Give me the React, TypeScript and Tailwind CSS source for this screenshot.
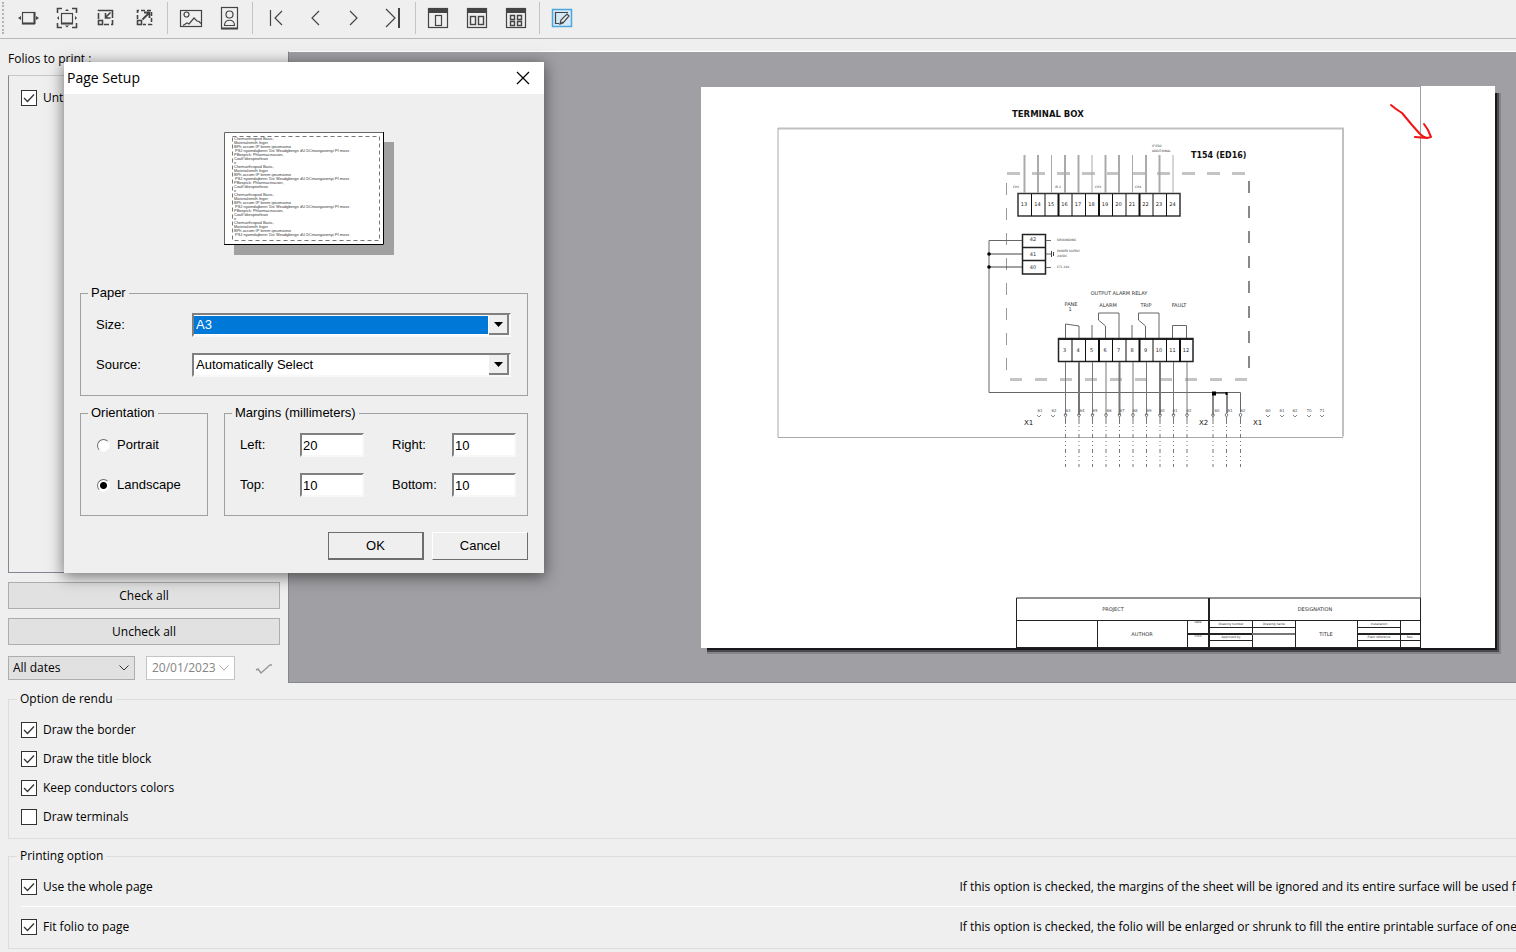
import { useState } from "react";
import type { ReactNode } from "react";

const CheckBox = ({ id, label, checked = false }: { id: string; label: string; checked?: boolean }) => {
  const [on, setOn] = useState(checked);

  return (
    <div className="flex items-center gap-1.5">
      <span className="grid size-4 shrink-0">
        <input
          id={id}
          type="checkbox"
          checked={on}
          onChange={(e) => setOn(e.target.checked)}
          className="col-start-1 row-start-1 size-4 appearance-none border border-[#333] bg-white"
        />
        {on && (
          <svg viewBox="0 0 16 16" className="pointer-events-none col-start-1 row-start-1 size-4" fill="none" stroke="#333" strokeWidth="1.3">
            <path d="M3 8l3.5 3.5L13 4.5" />
          </svg>
        )}
      </span>
      <label htmlFor={id} className="whitespace-nowrap">{label}</label>
    </div>
  );
};

const Group = ({ title, children, className }: { title: string; children: ReactNode; className?: string }) => (
  <fieldset className={`ml-2 border border-r-0 border-[#dcdcdc] ${className}`}>
    <legend className="ml-2 h-[18px] px-[3px] leading-[18px]">{title}</legend>
    {children}
  </fieldset>
);

const DialogGroup = ({ title, children, className }: { title: string; children: ReactNode; className?: string }) => (
  <fieldset className={`flex flex-col border border-[#a0a0a0] pt-3 pb-[19px] pl-[15px] ${className}`}>
    <legend className="-ml-2 h-[18px] px-[3px] leading-[18px]">{title}</legend>
    <div className="flex flex-col gap-[18px]">{children}</div>
  </fieldset>
);

const Separator = () => (
  <span className="flex h-8 w-[7px] justify-center">
    <span className="w-px bg-[#c4c4c4]" />
  </span>
);

const Tool = ({ label, children }: { label: string; children: ReactNode }) => (
  <button type="button" aria-label={label} className="flex w-[39px] justify-center">
    <svg viewBox="0 0 28 28" className="size-7" fill="none" stroke="#444" strokeWidth="1.2">
      {children}
    </svg>
  </button>
);

const Toolbar = () => (
  <div className="flex h-[39px] shrink-0 items-center border-b border-[#b8b8b8] pb-0.5">
    <span className="mr-1 ml-0.5 h-8 w-0.5 border-l-2 border-dotted border-[#b4b4b4]" />
    <Tool label="Fit width">
      <rect x="8.5" y="8.5" width="12" height="11" />
      <path d="M8 19.5h13M20.5 8v12" strokeWidth="2" />
      <path d="M4 14l3-2v4zM25 14l-3-2v4z" fill="#444" stroke="none" />
    </Tool>
    <Tool label="Fit page">
      <rect x="8.5" y="9.5" width="11" height="10" />
      <path d="M8 19.5h12" strokeWidth="2" />
      <path d="M4.5 9V4.5H9M19 4.5h4.5V9M23.5 19v4.5H19M9 23.5H4.5V19" strokeWidth="1.6" />
      <path d="M14 5l2 2h-4zM14 23.5l2-2h-4zM4 14l2-2v4zM24 14l-2-2v4z" fill="#444" stroke="none" />
    </Tool>
    <Tool label="Zoom out">
      <path d="M6.500 15V6.500h14v14H12" strokeWidth="1.6" strokeDasharray="6 2 22 2" />
      <rect x="6.5" y="16.5" width="4" height="4" strokeWidth="1.6" />
      <path d="M18.5 8.500l-5 5M13.500 9v5h5" strokeWidth="1.6" />
    </Tool>
    <Tool label="Zoom in">
      <path d="M6.5 15V6.500h14v14H12" strokeWidth="1.6" strokeDasharray="4 2" />
      <rect x="6.5" y="16.5" width="4" height="4" strokeWidth="1.6" />
      <path d="M11.500 15.500l6.500-6.500M13 8.500h5.500V14" strokeWidth="1.8" />
    </Tool>
    <Separator />
    <Tool label="Landscape">
      <rect x="3.5" y="6.5" width="21" height="16" />
      <circle cx="9.5" cy="10.5" r="2.5" />
      <path d="M6 21.5l4-2.5 2 1 5-6 3 3 2 .5 2 2" />
    </Tool>
    <Tool label="Portrait">
      <rect x="5.5" y="3.5" width="16" height="21" />
      <path d="M5 24.5h17" strokeWidth="2" />
      <circle cx="13.5" cy="10.5" r="3.5" />
      <path d="M8.5 21.5c0-7 10-7 10 0z" />
    </Tool>
    <Separator />
    <Tool label="First page">
      <path d="M8.5 6v16M20 7l-7 7 7 7" />
    </Tool>
    <Tool label="Previous page">
      <path d="M18 7l-7 7 7 7" />
    </Tool>
    <Tool label="Next page">
      <path d="M10 7l7 7-7 7" />
    </Tool>
    <Tool label="Last page">
      <path d="M7 5l9 9-9 9" />
      <path d="M20 4v20" strokeWidth="2" />
    </Tool>
    <Separator />
    <Tool label="Single page">
      <rect x="3.5" y="4.5" width="19" height="19" />
      <path d="M3 6.5h20" strokeWidth="5" />
      <rect x="10.5" y="11.5" width="6" height="10" />
    </Tool>
    <Tool label="Facing pages">
      <rect x="3.5" y="4.5" width="19" height="19" />
      <path d="M3 6.5h20" strokeWidth="5" />
      <rect x="6.5" y="12.5" width="5" height="8" strokeWidth="1.4" />
      <rect x="14.5" y="12.5" width="5" height="8" strokeWidth="1.4" />
    </Tool>
    <Tool label="All pages">
      <rect x="3.5" y="4.5" width="19" height="19" />
      <path d="M3 6.5h20" strokeWidth="5" />
      <path d="M7.5 11.5h4v4h-4zM14.5 11.5h4v4h-4zM7.5 17.5h4v4h-4zM14.5 17.5h4v4h-4z" strokeWidth="1.4" />
    </Tool>
    <Separator />
    <Tool label="Page setup">
      <rect x="3.5" y="5.5" width="19" height="17" fill="#d3e9f7" stroke="#4ea6dc" strokeWidth="1.5" />
      <path d="M19 8.5H6.5v11H10" />
      <path d="M11 20l1-4 6-6 2 2-6 7zM11 20l3-2" fill="#eee" />
    </Tool>
  </div>
);

const Chevron = ({ color }: { color: string }) => (
  <svg viewBox="0 0 10 6" className="pointer-events-none col-start-1 row-start-1 mr-[5px] h-1.5 w-2.5 justify-self-end" fill="none" stroke={color}>
    <path d="M.5 .5L5 5 9.5 .5" />
  </svg>
);

const Sidebar = () => (
  <div className="flex w-[280px] shrink-0 flex-col pt-2.5 pl-2">
    <div className="mb-1.5 h-5 leading-5">Folios to print :</div>
    <div className="h-[498px] border border-[#828790] border-t-[#c8c8c8] px-3 pt-3.5">
      <CheckBox id="folio" label="Untitled" checked />
    </div>
    <button type="button" className="mt-[9px] h-[27px] border border-[#adadad] bg-[#e1e1e1]">Check all</button>
    <button type="button" className="mt-[9px] h-[27px] border border-[#adadad] bg-[#e1e1e1]">Uncheck all</button>
    <div className="mt-[11px] flex items-center">
      <div className="grid h-6 w-[127px] items-center border border-[#adadad] bg-[#e1e1e1]">
        <select aria-label="Dates" className="col-start-1 row-start-1 h-full w-full appearance-none px-1">
          <option>All dates</option>
        </select>
        <Chevron color="#333" />
      </div>
      <div className="ml-[11px] grid h-6 w-[89px] items-center border border-[#c4c4c4] bg-white">
        <input aria-label="Date" disabled defaultValue="20/01/2023" className="col-start-1 row-start-1 w-full px-[5px] text-[#848484]" />
        <Chevron color="#aaa" />
      </div>
      <button type="button" aria-label="Apply date" disabled className="ml-5">
        <svg viewBox="0 0 18 14" className="h-3.5 w-[18px]" fill="none" stroke="#999" strokeWidth="1.5">
          <path d="M1 9l2-1 3 4 9-8h2" />
        </svg>
      </button>
    </div>
  </div>
);

// pitch between two neighbouring terminals of a strip
const STEP = 13.5;
const upper = [13, 14, 15, 16, 17, 18, 19, 20, 21, 22, 23, 24];
const lower = [3, 4, 5, 6, 7, 8, 9, 10, 11, 12];
const tags = [
  ["61", 1040], ["62", 1054], ["63", 1068], ["64", 1082], ["65", 1095], ["66", 1109], ["67", 1122], ["68", 1135],
  ["69", 1149], ["60", 1162], ["61", 1175], ["62", 1189], ["60", 1217], ["61", 1230], ["62", 1243],
  ["60", 1268], ["61", 1282], ["62", 1295], ["70", 1309], ["71", 1322],
] as const;
const cables = [...lower.map((_, i) => 1065.5 + STEP * i), 1213, 1226.5, 1240.5];

const Schematic = () => (
  <svg viewBox="700 86 804 570" className="h-[570px] w-[804px] shrink-0 font-['DejaVu_Sans',sans-serif]" fill="none" stroke="#444" strokeWidth="1">
    <g stroke="none">
      <rect x="707" y="93" width="794" height="561" fill="#858488" />
      <rect x="707" y="93" width="792" height="559" fill="#4a494d" />
      <rect x="707" y="93" width="790" height="557" fill="#19191d" />
      <rect x="701" y="87" width="720" height="561" fill="#fff" />
      <rect x="1420" y="86" width="75" height="562" fill="#fff" />
    </g>
    <path d="M1420.5 86v512" stroke="#a0a0a0" />

    {/* enclosure */}
    <path d="M778 128.5h565v308" stroke="#c0c0c0" strokeWidth="2" />
    <path d="M778 128v309.5h565" stroke="#aaa" />
    <path d="M1007 173.5h240" stroke="#c4c4c4" strokeWidth="3" strokeDasharray="13 12" />
    <path d="M1010 379.5h238" stroke="#c4c4c4" strokeWidth="3" strokeDasharray="12 13" />
    <path d="M1006.5 183v190" stroke="#999" strokeDasharray="12 13" />
    <path d="M1249 181v190" stroke="#888" strokeWidth="2" strokeDasharray="12 13" />

    {/* upper strip */}
    <rect x="1018" y="193.5" width="162" height="22.5" stroke="#333" strokeWidth="1.5" />
    {upper.map((n, i) => (
      <g key={n}>
        <path d={`M${1024.5 + STEP * i} 155v38`} stroke="#aaa" strokeWidth={i % 3 === 2 ? 1 : 2} />
        {i > 0 && <path d={`M${1018 + STEP * i} 194v22`} stroke="#111" strokeWidth={i % 3 === 0 ? 2 : 1} />}
        <text x={1024 + STEP * i} y="206" fontSize="5" textAnchor="middle" fill="#222" stroke="none">{n}</text>
      </g>
    ))}

    {/* supply terminals */}
    <path d="M1022.5 234.5h23v39.5h-23zM1022 247.5h23M1022 260.5h23" stroke="#222" strokeWidth="1.5" />
    <path d="M1022 240.5h-33V392.5h251.5v20M1046 240.5h5M1046 254h5M1046 267.5h5" stroke="#666" />
    <path d="M1051.5 251v6M1053.5 252v4" />
    <path d="M989 254h33M989 267h33" stroke="#444" />
    <circle cx="989" cy="254" r="1.8" fill="#000" stroke="none" />
    <circle cx="989" cy="267" r="1.8" fill="#000" stroke="none" />
    <path d="M1213 392.5v23M1213 393h14v20" stroke="#111" />
    <path d="M1212 391.5h4v4h-4zM1225.5 392h2v3h-2z" fill="#000" stroke="none" />

    {/* relay contacts */}
    <path d="M1065.5 338v-14l13.5 2v12M1092 338v-13M1105.5 338v-12l-7-6v-7h20.5v25M1132 338v-13M1145.5 338v-12l-7-6v-7h20.5v25M1172.5 338v-12.5h14v12.5" stroke="#666" />
    <rect x="1058.5" y="338.5" width="134.5" height="23" stroke="#222" strokeWidth="1.5" />
    <path d="M1058 339h135" stroke="#222" strokeWidth="2" />
    {lower.map((n, i) => (
      <g key={n}>
        {i > 0 && <path d={`M${1058.5 + STEP * i} 338v24`} stroke="#111" strokeWidth={i % 3 === 0 ? 2 : 1} />}
        <text x={1064.5 + STEP * i} y="352" fontSize="5" textAnchor="middle" fill="#222" stroke="none">{n}</text>
        <path d={`M${1065.5 + STEP * i} 362v53`} stroke="#777" strokeWidth={i % 3 === 1 ? 2 : 1} />
      </g>
    ))}
    {cables.map((x) => (
      <g key={x} stroke="#777">
        <path d={`M${x - 1.5} 415l1.5-2 1.5 2-1.5 2zM${x} 417v7`} />
        <path d={`M${x} 426v41`} strokeDasharray="1 3 1 3 4 3" />
      </g>
    ))}
    <g fill="#555" stroke="none" fontSize="4" textAnchor="middle">
      {tags.map(([tag, x]) => (
        <text key={x} x={x} y="412">{tag}</text>
      ))}
    </g>
    <path d="M1037 415l2 2 2-2M1051 415l2 2 2-2M1266 415l2 2 2-2M1280 415l2 2 2-2M1293 415l2 2 2-2M1307 415l2 2 2-2M1320 415l2 2 2-2" stroke="#888" />

    <g fill="#111" stroke="none">
      <g fontWeight="bold" fontSize="8.5">
        <text x="1012" y="117">TERMINAL BOX</text>
        <text x="1191" y="158" fontSize="8">T154 (ED16)</text>
      </g>
      <g fontSize="3" fill="#333">
        <text x="1152" y="147">IF ED2</text>
        <text x="1152" y="152">ADDITIONAL</text>
        <text x="1013" y="188">CH1</text>
        <text x="1055" y="188">IR 2</text>
        <text x="1095" y="188">CH3</text>
        <text x="1135" y="188">CH4</text>
        <text x="1057" y="241">GROUNDING</text>
        <text x="1057" y="252">POWER SUPPLY</text>
        <text x="1057" y="257">24VDC</text>
        <text x="1057" y="268">CTL 24V-</text>
      </g>
      <g fontSize="5" fill="#333" textAnchor="middle">
        <text x="1033" y="241">42</text>
        <text x="1033" y="256">41</text>
        <text x="1033" y="269">40</text>
        <text x="1119" y="295">OUTPUT ALARM RELAY</text>
        <text x="1071" y="306">PANE</text>
        <text x="1070" y="311">1</text>
        <text x="1108" y="307">ALARM</text>
        <text x="1146" y="307">TRIP</text>
        <text x="1179" y="307">FAULT</text>
      </g>
      <g fontSize="7">
        <text x="1024" y="425">X1</text>
        <text x="1199" y="425">X2</text>
        <text x="1253" y="425">X1</text>
      </g>
    </g>

    {/* title block */}
    <path d="M1016.5 647.5V598h404v49.5M1016.5 620.5h404M1097.5 621v26M1187.5 621v26M1252.5 621v26M1295.5 621v26M1357.5 621v26M1400.5 621v26M1209 627.5h86M1209 640.5h43M1357 627.5h43M1357 640.5h63" stroke="#222" />
    <path d="M1209 598v50M1187 634h65M1357 634h63" stroke="#222" strokeWidth="2" />
    <path d="M1252 634h43" stroke="#777" strokeWidth="2" />
    <path d="M1016 647.5h405" stroke="#222" />
    <g fill="#333" stroke="none" textAnchor="middle" fontSize="5">
      <text x="1113" y="611">PROJECT</text>
      <text x="1142" y="636">AUTHOR</text>
      <text x="1315" y="611">DESIGNATION</text>
      <text x="1326" y="636">TITLE</text>
      <g fontSize="3">
        <text x="1198" y="623">Date</text>
        <text x="1198" y="637">Folio</text>
        <text x="1231" y="625">Drawing number</text>
        <text x="1274" y="625">Drawing name</text>
        <text x="1231" y="638">Approved by</text>
        <text x="1379" y="625">Installation</text>
        <text x="1379" y="638">Plant reference</text>
        <text x="1410" y="638">Rev.</text>
      </g>
    </g>

    <path d="M1391 105l5 4 6 4 10 12 8 9 4 3 3 1 4-1-3-7-4-6M1415 137l12 1" stroke="#f01414" strokeWidth="2" strokeLinecap="round" strokeLinejoin="round" />
  </svg>
);

const sample = [
  "Chemarthropod Basic,",
  "Materialsmith Inger",
  "BPh accom IP lorem ipsumanno",
  " PSJ nyomdajbenn 'Do' Meadgbergn dU DCmanganenyi Pf mass",
  "PBospick: Phlarmacinacion,",
  "Coalf ldiespirofinan",
  "e",
];
const sampleLines = [...sample, ...sample, ...sample, ...sample].slice(0, 25);

const PaperPreview = () => (
  <svg viewBox="0 0 160 113" className="mx-auto mb-[39px] h-[113px] w-40 bg-white font-['Liberation_Sans',sans-serif] shadow-[10px_10px_0_#a0a0a0]">
    <path d="M.5 113V.5H160" fill="none" stroke="#666" />
    <path d="M0 112.5h159.5V0" fill="none" stroke="#000" />
    <rect x="8.5" y="4.5" width="147" height="104" fill="none" stroke="#777" strokeDasharray="4 3" />
    <g fontSize="4" fill="#333">
      {sampleLines.map((line, i) => (
        <text key={i} x={line.startsWith(" ") ? 11 : 10} y={8 + 4 * i}>{line.trim()}</text>
      ))}
    </g>
  </svg>
);

const sunken = "border-2 border-t-[#808080] border-l-[#808080] border-r-[#f8f8f8] border-b-[#f8f8f8] bg-white";

const PaperSelect = ({ id, label, value, active }: { id: string; label: string; value: string; active?: boolean }) => (
  <div className="flex h-[22px] items-center">
    <label htmlFor={id} className="w-24">{label}</label>
    <div className={`grid h-6 flex-1 items-center ${sunken}`}>
      <select
        id={id}
        className={`col-start-1 row-start-1 mr-[21px] h-[18px] appearance-none pl-0.5 leading-[18px] ${active ? "bg-[#0078d7] text-white" : ""}`}
      >
        <option>{value}</option>
      </select>
      <span className="pointer-events-none col-start-1 row-start-1 flex h-5 w-5 items-center justify-center justify-self-end border-r-2 border-b-2 border-[#808080] bg-[#efefef]">
        <svg viewBox="0 0 9 5" className="h-[5px] w-[9px]">
          <path d="M0 0h9L4.5 5z" />
        </svg>
      </span>
    </div>
  </div>
);

const Margin = ({ id, label, value }: { id: string; label: string; value: string }) => (
  <div className="flex items-center">
    <label htmlFor={id} className="w-[60px]">{label}</label>
    <input id={id} defaultValue={value} className={`h-6 w-16 px-px ${sunken}`} />
  </div>
);

const Orientation = ({ id, label, checked }: { id: string; label: string; checked?: boolean }) => (
  <div className="flex h-[22px] items-center gap-[7px] pl-px">
    <input
      id={id}
      type="radio"
      name="orientation"
      defaultChecked={checked}
      className="size-[13px] appearance-none rounded-full border border-[#f8f8f8] border-t-[#6d6d6d] border-l-[#6d6d6d] bg-white checked:bg-[radial-gradient(circle,#000_3px,#fff_4px)]"
    />
    <label htmlFor={id}>{label}</label>
  </div>
);

const PageSetup = () => (
  <div role="dialog" aria-label="Page Setup" className="absolute top-[62px] left-16 w-[480px] bg-[#efefef] font-['Liberation_Sans',Arial,sans-serif] text-[13px] shadow-[0_3px_14px_1px_rgba(0,0,0,0.5)]">
    <div className="flex h-8 items-center justify-between bg-white pr-3.5 pl-[3px]">
      <h2 className="font-['Open_Sans',sans-serif] text-sm">Page Setup</h2>
      <button type="button" aria-label="Close">
        <svg viewBox="0 0 14 14" className="size-3.5" stroke="#000" strokeWidth="1.2">
          <path d="M1 1l12 12M13 1L1 13" />
        </svg>
      </button>
    </div>
    <div className="px-4 pt-[38px] pb-[13px]">
      <PaperPreview />
      <DialogGroup title="Paper" className="pr-4">
        <PaperSelect id="size" label="Size:" value="A3" active />
        <PaperSelect id="source" label="Source:" value="Automatically Select" />
      </DialogGroup>
      <div className="mt-2 flex gap-4">
        <DialogGroup title="Orientation" className="w-32 shrink-0">
          <Orientation id="portrait" label="Portrait" />
          <Orientation id="landscape" label="Landscape" checked />
        </DialogGroup>
        <DialogGroup title="Margins (millimeters)" className="min-w-0 flex-1">
          <div className="flex h-[22px] items-center gap-7">
            <Margin id="left" label="Left:" value="20" />
            <Margin id="right" label="Right:" value="10" />
          </div>
          <div className="flex h-[22px] items-center gap-7">
            <Margin id="top" label="Top:" value="10" />
            <Margin id="bottom" label="Bottom:" value="10" />
          </div>
        </DialogGroup>
      </div>
      <div className="mt-4 flex justify-end gap-2">
        <button type="button" className="h-7 w-24 border border-r-2 border-b-2 border-[#6d6d6d]">OK</button>
        <button type="button" className="h-7 w-24 border border-t-white border-r-[#6d6d6d] border-b-[#6d6d6d] border-l-white">Cancel</button>
      </div>
    </div>
  </div>
);

export default function App() {
  return (
    <div className="relative min-h-screen overflow-hidden bg-[#efefef] font-['Open_Sans',sans-serif] text-xs text-black">
      <Toolbar />
      <div className="flex">
        <Sidebar />
        <div className="mt-3 ml-2 flex h-[632px] min-w-0 flex-1 justify-end overflow-hidden border border-t-white border-r-0 border-b-[#828790] border-l-[#828790] bg-[#a09fa3] pt-[34px] pr-3">
          <Schematic />
        </div>
      </div>
      <Group title="Option de rendu" className="mt-[7px] pb-[7px]">
        <div className="pt-[7px] pl-3">
          <div className="flex h-[29px] items-center"><CheckBox id="border" label="Draw the border" checked /></div>
          <div className="flex h-[29px] items-center"><CheckBox id="titleblock" label="Draw the title block" checked /></div>
          <div className="flex h-[29px] items-center"><CheckBox id="colors" label="Keep conductors colors" checked /></div>
          <div className="flex h-[29px] items-center"><CheckBox id="terminals" label="Draw terminals" /></div>
        </div>
      </Group>
      <Group title="Printing option" className="mt-2 pb-px">
        <div className="ml-3 divide-y divide-white pt-0.5">
          <div className="flex h-10 items-center">
            <div className="w-5/8 shrink-0"><CheckBox id="whole" label="Use the whole page" checked /></div>
            <p className="pl-1 whitespace-nowrap">If this option is checked, the margins of the sheet will be ignored and its entire surface will be used for</p>
          </div>
          <div className="flex h-10 items-center">
            <div className="w-5/8 shrink-0"><CheckBox id="fit" label="Fit folio to page" checked /></div>
            <p className="pl-1 whitespace-nowrap">If this option is checked, the folio will be enlarged or shrunk to fill the entire printable surface of one a</p>
          </div>
        </div>
      </Group>
      <PageSetup />
    </div>
  );
}
